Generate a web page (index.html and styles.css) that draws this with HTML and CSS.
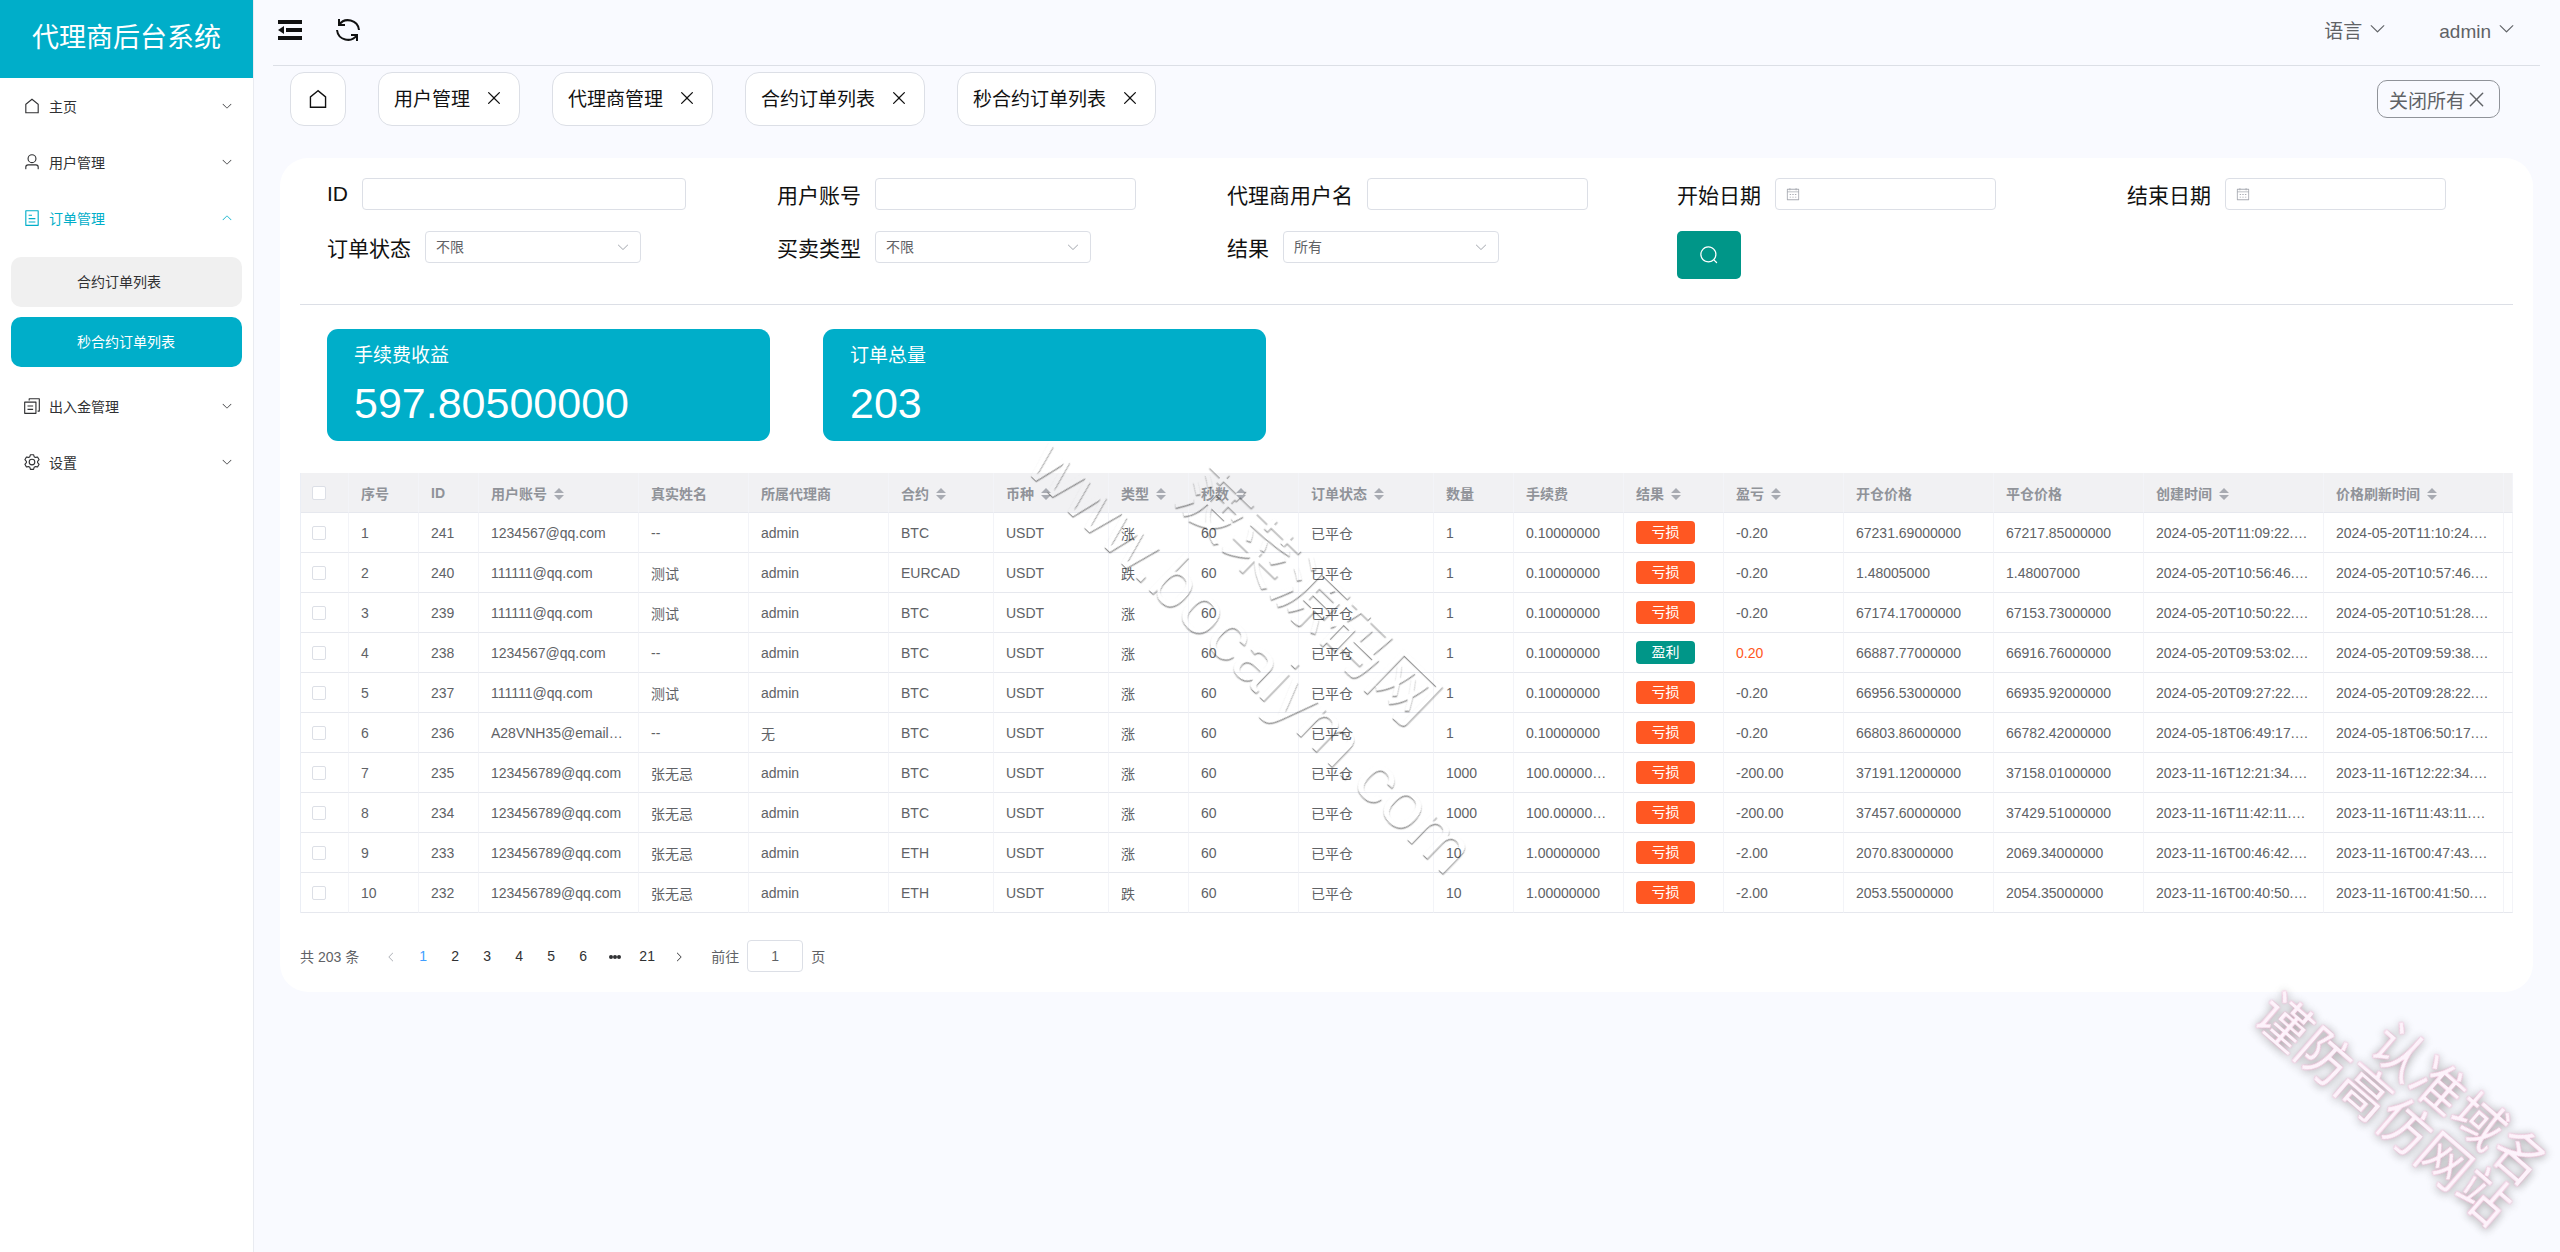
FILE: index.html
```html
<!DOCTYPE html>
<html lang="zh-CN">
<head>
    <meta charset="UTF-8">
    <meta name="viewport" content="width=device-width, initial-scale=1.0">
    <title>代理商后台系统</title>
    <link rel="stylesheet" href="styles.css">
</head>
<body>
    <!-- shared icons -->
    <svg class="hide">
        <symbol id="i-down" viewBox="0 0 1024 1024"><path d="M831.872 340.864 512 652.672 192.128 340.864a30.592 30.592 0 0 0-42.752 0 29.12 29.12 0 0 0 0 41.6L489.664 714.24a32 32 0 0 0 44.672 0l340.288-331.712a29.12 29.12 0 0 0 0-41.728 30.592 30.592 0 0 0-42.752 0z"/></symbol>
        <symbol id="i-close" viewBox="0 0 1024 1024"><path d="M764.288 214.592 512 466.88 259.712 214.592a31.936 31.936 0 0 0-45.12 45.12L466.752 512 214.528 764.224a31.936 31.936 0 1 0 45.12 45.184L512 557.184l252.288 252.288a31.936 31.936 0 0 0 45.12-45.12L557.12 512.064l252.288-252.352a31.936 31.936 0 1 0-45.12-45.184z"/></symbol>
        <symbol id="i-house" viewBox="0 0 1024 1024"><path d="M512 128 160 416V896H864V416Z" fill="none" stroke="currentColor" stroke-width="64"/></symbol>
        <symbol id="i-user" viewBox="0 0 1024 1024"><path d="M512 512a192 192 0 1 0 0-384 192 192 0 0 0 0 384zm0 64a256 256 0 1 1 0-512 256 256 0 0 1 0 512zm320 320v-96a96 96 0 0 0-96-96H288a96 96 0 0 0-96 96v96a32 32 0 1 1-64 0v-96a160 160 0 0 1 160-160h448a160 160 0 0 1 160 160v96a32 32 0 1 1-64 0z"/></symbol>
        <symbol id="i-ticket" viewBox="0 0 1024 1024"><path d="M192 128v768h640V128H192zm-32-64h704a32 32 0 0 1 32 32v832a32 32 0 0 1-32 32H160a32 32 0 0 1-32-32V96a32 32 0 0 1 32-32zm160 448h384v64H320v-64zm0-192h192v64H320v-64zm0 384h384v64H320v-64z"/></symbol>
        <symbol id="i-copy" viewBox="0 0 1024 1024"><path d="M128 320v576h576V320H128zm-32-64h640a32 32 0 0 1 32 32v640a32 32 0 0 1-32 32H96a32 32 0 0 1-32-32V288a32 32 0 0 1 32-32zM960 96v704a32 32 0 0 1-32 32h-96v-64h64V128H384v64h-64V96a32 32 0 0 1 32-32h576a32 32 0 0 1 32 32zM256 672h320v64H256v-64zm0-192h320v64H256v-64z"/></symbol>
        <symbol id="i-setting" viewBox="0 0 1024 1024"><path d="M600.704 64a32 32 0 0 1 30.464 22.208l35.2 109.376c14.784 7.232 28.928 15.36 42.432 24.512l112.384-24.192a32 32 0 0 1 34.432 15.36L944.32 364.8a32 32 0 0 1-4.032 37.504l-77.12 85.12a357.12 357.12 0 0 1 0 49.024l77.12 85.248a32 32 0 0 1 4.032 37.504l-88.704 153.6a32 32 0 0 1-34.432 15.296L708.8 803.904c-13.44 9.088-27.648 17.28-42.368 24.512l-35.264 109.376A32 32 0 0 1 600.704 960H423.296a32 32 0 0 1-30.464-22.208L357.696 828.48a351.616 351.616 0 0 1-42.56-24.64l-112.32 24.256a32 32 0 0 1-34.432-15.36L79.68 659.2a32 32 0 0 1 4.032-37.504l77.12-85.248a357.12 357.12 0 0 1 0-48.896l-77.12-85.248A32 32 0 0 1 79.68 364.8l88.704-153.6a32 32 0 0 1 34.432-15.296l112.32 24.256c13.568-9.152 27.776-17.408 42.56-24.64l35.2-109.312A32 32 0 0 1 423.232 64H600.64zm-23.424 64H446.72l-36.352 113.088-24.512 11.968a294.113 294.113 0 0 0-34.816 20.096l-22.656 15.36-116.224-25.088-65.28 113.152 79.68 88.192-1.92 27.136a293.12 293.12 0 0 0 0 40.192l1.92 27.136-79.808 88.192 65.344 113.152 116.224-25.024 22.656 15.296a294.113 294.113 0 0 0 34.816 20.096l24.512 11.968L446.72 896h130.688l36.48-113.152 24.448-11.904a288.282 288.282 0 0 0 34.752-20.096l22.592-15.296 116.288 25.024 65.28-113.152-79.744-88.192 1.92-27.136a293.12 293.12 0 0 0 0-40.256l-1.92-27.136 79.808-88.128-65.344-113.152-116.288 24.96-22.592-15.232a287.616 287.616 0 0 0-34.752-20.096l-24.448-11.904L577.344 128zM512 320a192 192 0 1 1 0 384 192 192 0 0 1 0-384zm0 64a128 128 0 1 0 0 256 128 128 0 0 0 0-256z"/></symbol>
        <symbol id="i-search" viewBox="0 0 1024 1024"><path d="m795.904 750.72 124.992 124.928a32 32 0 0 1-45.248 45.248L750.656 795.904a416 416 0 1 1 45.248-45.248zM480 832a352 352 0 1 0 0-704 352 352 0 0 0 0 704z"/></symbol>
        <symbol id="i-date" viewBox="0 0 1024 1024"><path d="M128 384v512h768V192H768v32a32 32 0 1 1-64 0v-32H320v32a32 32 0 0 1-64 0v-32H128v128h768v64H128zm192-256h384V96a32 32 0 1 1 64 0v32h160a32 32 0 0 1 32 32v768a32 32 0 0 1-32 32H96a32 32 0 0 1-32-32V160a32 32 0 0 1 32-32h160V96a32 32 0 0 1 64 0v32zm-32 384h64a32 32 0 0 1 0 64h-64a32 32 0 0 1 0-64zm0 192h64a32 32 0 1 1 0 64h-64a32 32 0 1 1 0-64zm192-192h64a32 32 0 0 1 0 64h-64a32 32 0 0 1 0-64zm0 192h64a32 32 0 1 1 0 64h-64a32 32 0 1 1 0-64zm192-192h64a32 32 0 1 1 0 64h-64a32 32 0 1 1 0-64zm0 192h64a32 32 0 1 1 0 64h-64a32 32 0 1 1 0-64z"/></symbol>
        <symbol id="i-sort" viewBox="0 0 10 12"><path d="M5 0 10 5H0zM0 7h10L5 12z"/></symbol>
    </svg>

    <div class="layout">
        <aside class="sidebar">
            <h1 class="logo">代理商后台系统</h1>
            <nav>
                <a class="menu-item" href="#"><svg class="icon"><use href="#i-house"/></svg><span>主页</span><svg class="arrow"><use href="#i-down"/></svg></a>
                <a class="menu-item" href="#"><svg class="icon"><use href="#i-user"/></svg><span>用户管理</span><svg class="arrow"><use href="#i-down"/></svg></a>
                <a class="menu-item open" href="#"><svg class="icon"><use href="#i-ticket"/></svg><span>订单管理</span><svg class="arrow"><use href="#i-down"/></svg></a>
                <div class="submenu">
                    <a href="#">合约订单列表</a>
                    <a class="active" href="#">秒合约订单列表</a>
                </div>
                <a class="menu-item" href="#"><svg class="icon"><use href="#i-copy"/></svg><span>出入金管理</span><svg class="arrow"><use href="#i-down"/></svg></a>
                <a class="menu-item" href="#"><svg class="icon"><use href="#i-setting"/></svg><span>设置</span><svg class="arrow"><use href="#i-down"/></svg></a>
            </nav>
        </aside>

        <main class="main">
            <header class="topbar">
                <button class="tool" aria-label="收起菜单">
                    <svg width="26" height="26" viewBox="0 0 26 26"><path d="M1 3h24v4H1zM9 11h16v4H9zM1 19h24v4H1zM1 13l6-4v8z"/></svg>
                </button>
                <button class="tool" aria-label="刷新">
                    <svg class="line" width="26" height="26" viewBox="0 0 26 26"><path d="M4 8a11 11 0 0 1 20 5M22 18A11 11 0 0 1 2 13M4 2v6h6M22 24v-6h-6"/></svg>
                </button>
                <div class="user-menu">
                    <button>语言<svg><use href="#i-down"/></svg></button>
                    <button>admin<svg><use href="#i-down"/></svg></button>
                </div>
            </header>

            <div class="tabs">
                <a class="tab home" href="#" aria-label="主页"><svg><use href="#i-house"/></svg></a>
                <div class="tab"><a href="#">用户管理</a><button aria-label="关闭"><svg><use href="#i-close"/></svg></button></div>
                <div class="tab"><a href="#">代理商管理</a><button aria-label="关闭"><svg><use href="#i-close"/></svg></button></div>
                <div class="tab"><a href="#">合约订单列表</a><button aria-label="关闭"><svg><use href="#i-close"/></svg></button></div>
                <div class="tab"><a href="#">秒合约订单列表</a><button aria-label="关闭"><svg><use href="#i-close"/></svg></button></div>
                <button class="close-all">关闭所有<svg><use href="#i-close"/></svg></button>
            </div>

            <section class="card">
                <form class="filter">
                    <div class="fields">
                        <div class="field"><label for="f-id">ID</label><span class="control wide"><input id="f-id" type="text"></span></div>
                        <div class="field"><label for="f-user">用户账号</label><span class="control mid"><input id="f-user" type="text"></span></div>
                        <div class="field"><label for="f-agent">代理商用户名</label><span class="control"><input id="f-agent" type="text"></span></div>
                        <div class="field"><label for="f-start">开始日期</label><span class="control"><svg><use href="#i-date"/></svg><input id="f-start" type="text"></span></div>
                        <div class="field"><label for="f-end">结束日期</label><span class="control"><svg><use href="#i-date"/></svg><input id="f-end" type="text"></span></div>
                        <div class="field"><label for="f-state">订单状态</label><span class="control pick"><select id="f-state"><option>不限</option></select><svg><use href="#i-down"/></svg></span></div>
                        <div class="field"><label for="f-type">买卖类型</label><span class="control pick"><select id="f-type"><option>不限</option></select><svg><use href="#i-down"/></svg></span></div>
                        <div class="field"><label for="f-result">结果</label><span class="control pick"><select id="f-result"><option>所有</option></select><svg><use href="#i-down"/></svg></span></div>
                        <button class="search" type="button" aria-label="搜索"><svg><use href="#i-search"/></svg></button>
                    </div>
                </form>

                <div class="content">
                    <div class="stats">
                        <div class="stat"><p>手续费收益</p><strong>597.80500000</strong></div>
                        <div class="stat"><p>订单总量</p><strong>203</strong></div>
                    </div>

                    <table class="orders">
                        <thead><tr id="head"></tr></thead>
                        <tbody id="rows"></tbody>
                    </table>

                    <div class="pager">
                        <span>共 203 条</span>
                        <div class="pages">
                            <button class="prev" disabled aria-label="上一页"><svg><use href="#i-down"/></svg></button>
                            <button class="current">1</button>
                            <button>2</button>
                            <button>3</button>
                            <button>4</button>
                            <button>5</button>
                            <button>6</button>
                            <button aria-label="更多"><svg viewBox="0 0 12 12"><circle cx="2" cy="6" r="2"/><circle cx="6" cy="6" r="2"/><circle cx="10" cy="6" r="2"/></svg></button>
                            <button>21</button>
                            <button class="next" aria-label="下一页"><svg><use href="#i-down"/></svg></button>
                        </div>
                        <label for="jump">前往</label>
                        <input id="jump" type="text" value="1">
                        <span>页</span>
                    </div>
                </div>
            </section>
        </main>
    </div>

    <div class="watermark"><p>菠菜源码网</p><p class="site">www.bocaiym.com</p></div>
    <div class="stamp"><p>认准域名</p><p>谨防高仿网站</p></div>

    <script>
        // title, width, sortable
        const columns = [
            ["序号", 70], ["ID", 60], ["用户账号", 160, true], ["真实姓名", 110], ["所属代理商", 140],
            ["合约", 105, true], ["币种", 115, true], ["类型", 80, true], ["秒数", 110, true], ["订单状态", 135, true],
            ["数量", 80], ["手续费", 110], ["结果", 100, true], ["盈亏", 120, true], ["开仓价格", 150],
            ["平仓价格", 150], ["创建时间", 180, true], ["价格刷新时间", 180, true]
        ];

        const orders = [
            [1, 241, "1234567@qq.com", "--", "admin", "BTC", "USDT", "涨", 60, "已平仓", 1, "0.10000000", "亏损", "-0.20", "67231.69000000", "67217.85000000", "2024-05-20T11:09:22.…", "2024-05-20T11:10:24.…"],
            [2, 240, "111111@qq.com", "测试", "admin", "EURCAD", "USDT", "跌", 60, "已平仓", 1, "0.10000000", "亏损", "-0.20", "1.48005000", "1.48007000", "2024-05-20T10:56:46.…", "2024-05-20T10:57:46.…"],
            [3, 239, "111111@qq.com", "测试", "admin", "BTC", "USDT", "涨", 60, "已平仓", 1, "0.10000000", "亏损", "-0.20", "67174.17000000", "67153.73000000", "2024-05-20T10:50:22.…", "2024-05-20T10:51:28.…"],
            [4, 238, "1234567@qq.com", "--", "admin", "BTC", "USDT", "涨", 60, "已平仓", 1, "0.10000000", "盈利", "0.20", "66887.77000000", "66916.76000000", "2024-05-20T09:53:02.…", "2024-05-20T09:59:38.…"],
            [5, 237, "111111@qq.com", "测试", "admin", "BTC", "USDT", "涨", 60, "已平仓", 1, "0.10000000", "亏损", "-0.20", "66956.53000000", "66935.92000000", "2024-05-20T09:27:22.…", "2024-05-20T09:28:22.…"],
            [6, 236, "A28VNH35@email…", "--", "无", "BTC", "USDT", "涨", 60, "已平仓", 1, "0.10000000", "亏损", "-0.20", "66803.86000000", "66782.42000000", "2024-05-18T06:49:17.…", "2024-05-18T06:50:17.…"],
            [7, 235, "123456789@qq.com", "张无忌", "admin", "BTC", "USDT", "涨", 60, "已平仓", 1000, "100.00000…", "亏损", "-200.00", "37191.12000000", "37158.01000000", "2023-11-16T12:21:34.…", "2023-11-16T12:22:34.…"],
            [8, 234, "123456789@qq.com", "张无忌", "admin", "BTC", "USDT", "涨", 60, "已平仓", 1000, "100.00000…", "亏损", "-200.00", "37457.60000000", "37429.51000000", "2023-11-16T11:42:11.…", "2023-11-16T11:43:11.…"],
            [9, 233, "123456789@qq.com", "张无忌", "admin", "ETH", "USDT", "涨", 60, "已平仓", 10, "1.00000000", "亏损", "-2.00", "2070.83000000", "2069.34000000", "2023-11-16T00:46:42.…", "2023-11-16T00:47:43.…"],
            [10, 232, "123456789@qq.com", "张无忌", "admin", "ETH", "USDT", "跌", 60, "已平仓", 10, "1.00000000", "亏损", "-2.00", "2053.55000000", "2054.35000000", "2023-11-16T00:40:50.…", "2023-11-16T00:41:50.…"]
        ];

        const check = (label) => `<input type="checkbox" aria-label="${label}">`;

        document.querySelector("#head").innerHTML = `<th class="check">${check("全选")}</th>` +
            columns.map(([title, width, sort]) =>
                `<th style="width:${width}px">${title}${sort ? '<svg><use href="#i-sort"/></svg>' : ""}</th>`
            ).join("") + "<th class='gutter'></th>";

        document.querySelector("#rows").innerHTML = orders.map((row) => {
            const win = row[12] === "盈利";
            const cells = row.map((value, i) => {
                if (i === 12) return `<td><button class="badge ${win ? "win" : ""}">${value}</button></td>`;
                if (i === 13 && win) return `<td class="gain">${value}</td>`;
                return `<td>${value}</td>`;
            }).join("");
            return `<tr><td class="check">${check("选择 " + row[1])}</td>${cells}<td class="gutter"></td></tr>`;
        }).join("");
    </script>
</body>
</html>
```
FILE: styles.css
```css
* {
    box-sizing: border-box;
    margin: 0;
    padding: 0;
}
body {
    background-color: #f9faff;
    font-family: "Liberation Sans", "Noto Sans CJK SC", sans-serif;
    font-size: 14px;
    color: #606266;
}
a {
    color: inherit;
    text-decoration: none;
}
button, input, select {
    font: inherit;
    color: inherit;
    background: none;
    border: none;
    outline: none;
}
button {
    cursor: pointer;
}
svg {
    fill: currentColor;
    flex: none;
}
.line {
    fill: none;
    stroke: currentColor;
    stroke-width: 2;
}
.hide {
    display: none;
}
.layout {
    display: flex;
    min-height: 100vh;
}

/* sidebar */
.sidebar {
    flex: none;
    width: 253px;
    background-color: #fff;
    box-shadow: 1px 0 0 #e9ebf1;
    color: #303133;
}
.logo {
    height: 78px;
    background-color: #00aec9;
    color: #fff;
    font-size: 27px;
    font-weight: 400;
    line-height: 76px;
    text-align: center;
}
.menu-item {
    display: flex;
    align-items: center;
    height: 56px;
    padding: 0 20px 0 23px;
}
.menu-item .icon {
    width: 18px;
    height: 18px;
    margin-right: 8px;
}
.menu-item .arrow {
    width: 12px;
    height: 12px;
    margin-left: auto;
}
.open {
    color: #00aec9;
}
.open .arrow {
    transform: rotate(180deg);
}
.submenu {
    display: flex;
    flex-direction: column;
    gap: 10px;
    padding: 11px;
}
.submenu a {
    height: 50px;
    padding-left: 66px;
    border-radius: 10px;
    background-color: #f0f0f0;
    line-height: 50px;
}
.submenu .active {
    background-color: #00aec9;
    color: #fff;
}

/* top bar */
.main {
    flex: 1;
    min-width: 0;
    padding: 0 20px;
}
.topbar {
    display: flex;
    align-items: center;
    gap: 32px;
    height: 66px;
    padding: 0 24px 6px 4px;
    border-bottom: 1px solid #dcdfe6;
}
.tool {
    height: 26px;
    color: #111;
}
.user-menu {
    display: flex;
    gap: 52px;
    margin-left: auto;
    padding-top: 4px;
    font-size: 19px;
}
.user-menu button {
    display: flex;
    align-items: flex-start;
    gap: 6px;
    line-height: 26px;
}
.user-menu svg {
    width: 19px;
    height: 19px;
}

/* tabs */
.tabs {
    display: flex;
    align-items: center;
    gap: 32px;
    padding: 6px 40px 32px 17px;
    font-size: 19px;
}
.tab {
    display: flex;
    align-items: center;
    gap: 14px;
    height: 54px;
    padding: 0 15px 3px;
    border: 1px solid #dcdfe6;
    border-radius: 14px;
    background-color: #fff;
    color: #111;
}
.tab button, .tab svg {
    display: block;
    width: 20px;
    height: 20px;
}
.home {
    padding: 0 16px;
}
.home svg {
    width: 22px;
    height: 22px;
}
.close-all {
    display: flex;
    align-items: center;
    height: 38px;
    margin-left: auto;
    padding: 0 11px;
    border: 1px solid #909399;
    border-radius: 10px;
}
.close-all svg {
    width: 23px;
    height: 23px;
}

/* card with the filter form */
.card {
    margin: 0 7px;
    padding: 20px;
    border-radius: 28px;
    background-color: #fff;
}
.filter {
    padding: 0 0 25px 27px;
    border-bottom: 1px solid #dcdfe6;
}
.fields {
    display: grid;
    grid-template-columns: repeat(5, 1fr);
    row-gap: 21px;
    align-items: start;
    margin-right: -64px;
}
.field {
    display: flex;
    align-items: center;
    gap: 14px;
    height: 32px;
}
.field label {
    flex: none;
    color: #111;
    font-size: 21px;
}
.control {
    display: flex;
    align-items: center;
    width: 49%;
    height: 32px;
    padding: 0 10px;
    border: 1px solid #dcdfe6;
    border-radius: 4px;
}
.control.pick {
    width: 48%;
}
.control.mid {
    width: 58%;
}
.control.wide {
    width: 72%;
}
.control input, .control select {
    flex: 1;
    min-width: 0;
    height: 30px;
    appearance: none;
}
.control svg {
    width: 14px;
    height: 14px;
    color: #a8abb2;
    pointer-events: none;
}
.search {
    width: 64px;
    height: 48px;
    border-radius: 5px;
    background-color: #009688;
    color: #fff;
}
.search svg {
    width: 20px;
    height: 20px;
    vertical-align: middle;
}

/* numbers above the table */
.content {
    padding-top: 24px;
}
.stats {
    display: flex;
    gap: 53px;
    margin-bottom: 32px;
    padding-left: 27px;
}
.stat {
    width: 443px;
    height: 112px;
    padding: 13px 27px 0;
    border-radius: 11px;
    background-color: #00aec9;
    color: #fff;
}
.stat p {
    font-size: 19px;
    line-height: 28px;
}
.stat strong {
    display: block;
    font-size: 43px;
    font-weight: 400;
    line-height: 66px;
}

/* table */
.orders {
    width: 100%;
    border-left: 1px solid #ebeef5;
    border-spacing: 0;
    table-layout: fixed;
}
.orders th, .orders td {
    height: 40px;
    padding: 0 0 0 12px;
    border-right: 1px solid #f3f4f8;
    border-bottom: 1px solid #e6e8ee;
    overflow: hidden;
    text-align: left;
    white-space: nowrap;
}
.orders th {
    background-color: #f1f1f3;
    color: #909399;
    font-weight: 700;
}
.orders th svg {
    width: 10px;
    height: 12px;
    margin-left: 7px;
    color: #a8abb2;
    vertical-align: -1px;
}
.orders .check {
    width: 48px;
    padding-left: 11px;
}
.orders .gutter {
    padding: 0;
}
.orders input {
    display: block;
    width: 14px;
    height: 14px;
    border: 1px solid #dcdfe6;
    border-radius: 2px;
    background-color: #fff;
    appearance: none;
}
.badge {
    display: block;
    width: 59px;
    height: 23px;
    border-radius: 4px;
    background-color: #ff5722;
    color: #fff;
    line-height: 23px;
}
.win {
    background-color: #009688;
}
.gain {
    color: #ff5722;
}

/* pagination */
.pager {
    display: flex;
    align-items: center;
    margin-top: 27px;
}
.pages {
    display: flex;
    margin: 0 16px;
    color: #303133;
}
.pages button {
    width: 32px;
    height: 32px;
}
.pages svg {
    width: 12px;
    height: 12px;
    vertical-align: middle;
}
.pages .current {
    color: #409eff;
}
.prev svg {
    transform: rotate(90deg);
}
.pages .prev {
    color: #a8abb2;
}
.next svg {
    transform: rotate(-90deg);
}
.pager > input {
    width: 56px;
    height: 32px;
    margin: 0 8px;
    border: 1px solid #dcdfe6;
    border-radius: 4px;
    text-align: center;
}

/* slanted marks over the page */
.watermark, .stamp {
    position: fixed;
    pointer-events: none;
    white-space: nowrap;
}
.watermark {
    top: 50%;
    left: 50%;
    transform: translate(-50%, -50%) rotate(44deg);
    mix-blend-mode: multiply;
    color: #fff;
    font-size: 66px;
    line-height: 82px;
    text-align: center;
    text-shadow: 1px 1px 1px #888;
}
.watermark .site {
    font-size: 71px;
}
.stamp {
    right: 0;
    bottom: 109px;
    transform: rotate(41deg);
    color: #fdf3fb;
    font-size: 53px;
    line-height: 53px;
    text-align: right;
    text-shadow: 0 0 1px #f0a8cc, 0 0 2px #f0a8cc, 1px 1px 10px #888;
}
```
